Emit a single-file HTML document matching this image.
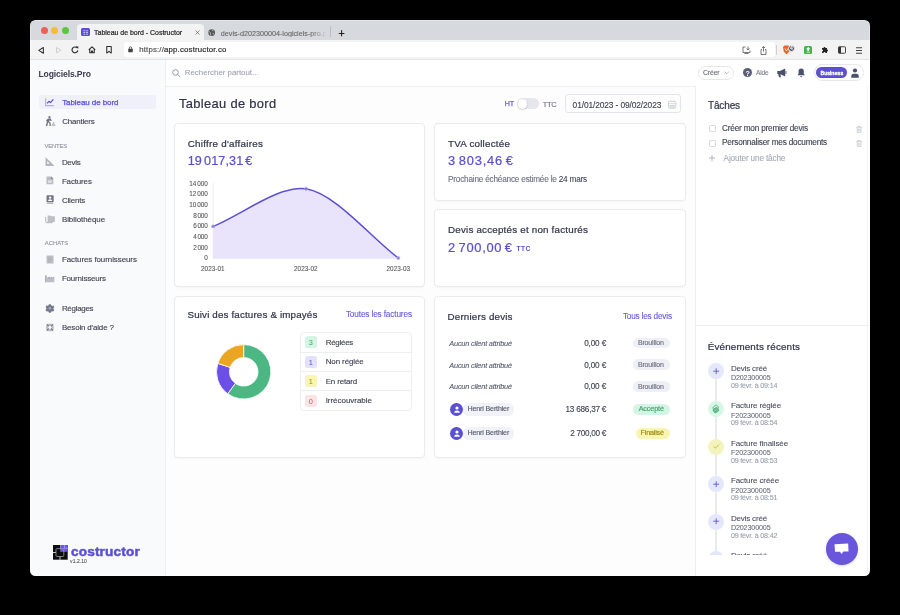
<!DOCTYPE html>
<html><head><meta charset="utf-8">
<style>
*{box-sizing:border-box;margin:0;padding:0}
html,body{width:900px;height:615px;overflow:hidden;background:#000}
body{font-family:"Liberation Sans",sans-serif;position:relative}
#win{will-change:transform;position:absolute;left:0;top:0;width:900px;height:615px;clip-path:inset(20px 30px 39px 30px round 5.5px);background:#fff}
.a{position:absolute}
.t{position:absolute;white-space:nowrap}
.card{position:absolute;background:#fff;border:1px solid #ebebee;border-radius:4px;box-shadow:0 1px 2px rgba(0,0,0,.035)}
svg{overflow:visible}
</style></head><body>
<div id="win">
<div class="a" style="left:30px;top:20px;width:841px;height:19.5px;background:#d6d9dd;"></div>
<div class="a" style="left:77px;top:23.5px;width:127px;height:16.5px;background:#f3f3f4;border-radius:4px 4px 0 0"></div>
<div class="a" style="left:30px;top:39.5px;width:841px;height:19.5px;background:#f3f3f3;"></div>
<div class="a" style="left:123.5px;top:42px;width:651px;height:14.5px;background:#ffffff;border-radius:3px"></div>
<div class="a" style="left:30px;top:59px;width:841px;height:1px;background:#e3e3e3;"></div>
<div class="a" style="left:40.5px;top:26.5px;width:7px;height:7px;background:#ee5f58;border-radius:50%"></div>
<div class="a" style="left:51.1px;top:26.5px;width:7px;height:7px;background:#f5bd2f;border-radius:50%"></div>
<div class="a" style="left:61.8px;top:26.5px;width:7px;height:7px;background:#5fc53f;border-radius:50%"></div>
<div class="a" style="left:81.2px;top:27.8px;width:8.6px;height:8.6px;background:#5b4fd1;border-radius:1.5px"></div>
<svg class="a" style="left:82.8px;top:29.6px" width="5.4" height="5" viewBox="0 0 11 10"><path d="M1 1.5h3.5M1 5h3.5M1 8.5h3.5M6.5 1.5h3.5M6.5 5h3.5M6.5 8.5h3.5" stroke="#fff" stroke-width="1.4"/></svg>
<div class="t" style="left:94.10px;top:29.47px;font-size:7px;line-height:7px;color:#2a2a2a;-webkit-text-stroke:0.22px #2a2a2a;letter-spacing:-0.027px">Tableau de bord - Costructor</div>
<svg class="a" style="left:195px;top:30.2px" width="5" height="5" viewBox="0 0 10 10"><path d="M1 1l8 8M9 1l-8 8" stroke="#555" stroke-width="1.3"/></svg>
<svg class="a" style="left:208.2px;top:28.6px" width="7.4" height="7.4" viewBox="0 0 16 16"><circle cx="8" cy="8" r="7.2" fill="#555"/><path d="M2.5 5.5c2 .5 3 2 2.5 3.5s1 2.5 1 5M9 1.2c-.5 1.8 1 2.8 3 2.5M10 9.5c1.5-.5 3 .5 3 2.5" stroke="#d6d9dd" stroke-width="1.5" fill="none"/></svg>
<div class="t" style="left:220.80px;top:29.51px;font-size:7.2px;line-height:7.2px;color:#666;-webkit-text-stroke:0.1px #666;width:106px;overflow:hidden;-webkit-mask-image:linear-gradient(90deg,#000 85%,transparent 100%)">devis-d202300004-logiciels-pro.pdf</div>
<div class="a" style="left:330px;top:26px;width:0.8px;height:11px;background:#b9bcc1;"></div>
<div class="t" style="left:338.60px;top:28.31px;font-size:10.5px;line-height:10.5px;color:#222;-webkit-text-stroke:0.4px #222">+</div>
<div class="a" style="left:30px;top:60px;width:135px;height:516px;background:#f9fafb;"></div>
<div class="a" style="left:165px;top:60px;width:1px;height:516px;background:#eceef1;"></div>
<div class="a" style="left:166px;top:60px;width:529px;height:516px;background:#fdfdfe;"></div>
<div class="a" style="left:166px;top:60px;width:705px;height:25.5px;background:#ffffff;"></div>
<div class="a" style="left:166px;top:85.5px;width:705px;height:1px;background:#eef0f3;"></div>
<div class="a" style="left:694.5px;top:86px;width:1px;height:490px;background:#eceef1;"></div>
<div class="a" style="left:695.5px;top:86px;width:175.5px;height:490px;background:#ffffff;"></div>
<div class="card" style="left:174px;top:122.5px;width:250.5px;height:164.5px"></div>
<div class="card" style="left:434px;top:122.5px;width:251.5px;height:78.5px"></div>
<div class="card" style="left:434px;top:209px;width:251.5px;height:78px"></div>
<div class="card" style="left:174px;top:295.5px;width:250.5px;height:162px"></div>
<div class="card" style="left:434px;top:295.5px;width:251.5px;height:162px"></div>
<svg class="a" style="left:38.4px;top:46.8px" width="6" height="6.8" viewBox="0 0 11 13"><path d="M10 1L1.2 6.5 10 12z" fill="none" stroke="#2e2e2e" stroke-width="2" stroke-linejoin="round"/></svg>
<svg class="a" style="left:55.6px;top:47px" width="5.4" height="6.4" viewBox="0 0 11 13"><path d="M1 1l8.8 5.5L1 12z" fill="none" stroke="#c4c4c4" stroke-width="1.6" stroke-linejoin="round"/></svg>
<svg class="a" style="left:71.2px;top:46.4px" width="8" height="7.6" viewBox="0 0 16 15"><path d="M13.6 8.5A5.8 5.8 0 1 1 11.8 3.4" fill="none" stroke="#2e2e2e" stroke-width="2.3"/><path d="M9.5 0.5l5.3 0.3-0.4 5.3z" fill="#2e2e2e"/></svg>
<svg class="a" style="left:88.4px;top:46.4px" width="8" height="7.6" viewBox="0 0 16 15"><path d="M1.5 7.5L8 1.5l6.5 6M3.5 6v7.5h3.5v-3.5h2v3.5h3.5V6" fill="none" stroke="#2e2e2e" stroke-width="2.2" stroke-linejoin="round"/></svg>
<svg class="a" style="left:106.3px;top:46px" width="6" height="7.6" viewBox="0 0 12 15"><path d="M1.5 1h9v13L6 10.5 1.5 14z" fill="none" stroke="#2e2e2e" stroke-width="2.1" stroke-linejoin="round"/></svg>
<svg class="a" style="left:128px;top:46px" width="5" height="6.5" viewBox="0 0 10 13"><path d="M2.5 6V4a2.5 2.5 0 0 1 5 0v2" fill="none" stroke="#444" stroke-width="1.6"/><rect x="0.5" y="5.5" width="9" height="7" rx="1.2" fill="#444"/></svg>
<div class="t" style="left:139.20px;top:46.30px;font-size:7.8px;line-height:7.8px;color:#262626;-webkit-text-stroke:0.18px #262626;letter-spacing:0.184px"><span style="color:#6f6f6f">https://</span>app.costructor.co</div>
<svg class="a" style="left:741.5px;top:46px" width="9" height="8" viewBox="0 0 18 16"><path d="M7 2H2v11h14V9" fill="none" stroke="#555" stroke-width="1.6"/><path d="M12 1v7M9 5l3 3 3-3" fill="none" stroke="#555" stroke-width="1.6"/><path d="M5 15h8" stroke="#555" stroke-width="1.6"/></svg>
<svg class="a" style="left:759.5px;top:45.5px" width="7" height="9" viewBox="0 0 14 18"><path d="M4 7H2v10h10V7h-2M7 1v10M4 4l3-3 3 3" fill="none" stroke="#555" stroke-width="1.6"/></svg>
<div class="a" style="left:775.8px;top:45px;width:0.8px;height:10px;background:#cfcfcf;"></div>
<svg class="a" style="left:782px;top:45px" width="9" height="10" viewBox="0 0 18 20"><path d="M2 4l3-3h8l3 3-1.5 9L9 19l-5.5-6z" fill="#f0632b"/><path d="M6 7l3 5 3-5" stroke="#fff" stroke-width="1.6" fill="none"/></svg>
<div class="a" style="left:787.8px;top:44.6px;width:7px;height:7px;background:#535766;border-radius:50%;border:0.8px solid #f3f3f3"></div>
<div class="t" style="left:789.90px;top:46.37px;font-size:5px;line-height:5px;color:#fff;font-weight:700">4</div>
<div class="a" style="left:803.6px;top:45.8px;width:8.4px;height:8.4px;background:#3fb54a;border-radius:1.5px"></div>
<svg class="a" style="left:805.6px;top:47.2px" width="4.4" height="5.6" viewBox="0 0 8 10"><path d="M4 0L0 4h2.5v3h3V4H8zM1 8.5h6V10H1z" fill="#fff"/></svg>
<svg class="a" style="left:821px;top:46px" width="8" height="8" viewBox="0 0 16 16"><path d="M2 4h3a2 2 0 1 1 4 0h3v3a2 2 0 1 1 0 4v3H9a2 2 0 1 0-4 0H2v-3a2 2 0 1 0 0-4z" fill="#222"/></svg>
<svg class="a" style="left:838px;top:46px" width="8" height="8" viewBox="0 0 16 16"><rect x="1" y="1.5" width="14" height="13" rx="2" fill="none" stroke="#333" stroke-width="1.8"/><rect x="1" y="1.5" width="5" height="13" fill="#333"/></svg>
<svg class="a" style="left:856px;top:46.5px" width="6" height="7" viewBox="0 0 12 14"><path d="M0 1.5h12M0 7h12M0 12.5h12" stroke="#444" stroke-width="2"/></svg>
<div class="t" style="left:38.50px;top:70.42px;font-size:8.6px;line-height:8.6px;color:#3b3d4f;font-weight:700;letter-spacing:-0.131px">Logiciels.Pro</div>
<div class="a" style="left:39.3px;top:95px;width:117px;height:14px;background:#f0f0fb;border-radius:3px"></div>
<div class="t" style="left:62.20px;top:99.03px;font-size:8.0px;line-height:8.0px;color:#5b4fd1;-webkit-text-stroke:0.25px #5b4fd1;letter-spacing:-0.078px">Tableau de bord</div>
<div class="t" style="left:62.20px;top:117.77px;font-size:7.95px;line-height:7.95px;color:#3f4152;-webkit-text-stroke:0.12px #3f4152;letter-spacing:-0.173px">Chantiers</div>
<div class="t" style="left:44.60px;top:143.91px;font-size:5.9px;line-height:5.9px;color:#8e91a3;-webkit-text-stroke:0.1px #8e91a3;letter-spacing:-0.196px">VENTES</div>
<div class="t" style="left:61.90px;top:158.97px;font-size:7.95px;line-height:7.95px;color:#3f4152;-webkit-text-stroke:0.12px #3f4152;letter-spacing:-0.265px">Devis</div>
<div class="t" style="left:61.90px;top:177.97px;font-size:7.95px;line-height:7.95px;color:#3f4152;-webkit-text-stroke:0.12px #3f4152;letter-spacing:-0.127px">Factures</div>
<div class="t" style="left:61.90px;top:197.17px;font-size:7.95px;line-height:7.95px;color:#3f4152;-webkit-text-stroke:0.12px #3f4152;letter-spacing:-0.161px">Clients</div>
<div class="t" style="left:61.90px;top:216.07px;font-size:7.95px;line-height:7.95px;color:#3f4152;-webkit-text-stroke:0.12px #3f4152;letter-spacing:-0.046px">Biblioth&egrave;que</div>
<div class="t" style="left:44.80px;top:241.11px;font-size:5.9px;line-height:5.9px;color:#8e91a3;-webkit-text-stroke:0.1px #8e91a3;letter-spacing:-0.034px">ACHATS</div>
<div class="t" style="left:61.90px;top:256.27px;font-size:7.95px;line-height:7.95px;color:#3f4152;-webkit-text-stroke:0.12px #3f4152;letter-spacing:-0.066px">Factures fournisseurs</div>
<div class="t" style="left:61.90px;top:275.47px;font-size:7.95px;line-height:7.95px;color:#3f4152;-webkit-text-stroke:0.12px #3f4152;letter-spacing:-0.163px">Fournisseurs</div>
<div class="t" style="left:61.90px;top:305.07px;font-size:7.95px;line-height:7.95px;color:#3f4152;-webkit-text-stroke:0.12px #3f4152;letter-spacing:-0.264px">R&eacute;glages</div>
<div class="t" style="left:61.90px;top:324.27px;font-size:7.95px;line-height:7.95px;color:#3f4152;-webkit-text-stroke:0.12px #3f4152;letter-spacing:-0.146px">Besoin d'aide ?</div>
<div class="t" style="left:71.00px;top:545.29px;font-size:13.6px;line-height:13.6px;color:#5b4fd1;font-weight:700;-webkit-text-stroke:0.5px #5b4fd1;letter-spacing:0.163px">costructor</div>
<div class="t" style="left:70.10px;top:559.07px;font-size:5px;line-height:5px;color:#555;-webkit-text-stroke:0.1px #555;letter-spacing:0.066px">v1.2.10</div>
<svg class="a" style="left:171.5px;top:68.5px" width="9" height="8.5" viewBox="0 0 18 17"><circle cx="7" cy="7" r="5.6" fill="none" stroke="#8a8f9d" stroke-width="1.8"/><path d="M11 11l5.5 5" stroke="#8a8f9d" stroke-width="1.9"/></svg>
<div class="t" style="left:184.80px;top:68.91px;font-size:7.9px;line-height:7.9px;color:#9ea1b0;-webkit-text-stroke:0.1px #9ea1b0;letter-spacing:-0.021px">Rechercher partout...</div>
<div class="a" style="left:698.4px;top:65.6px;width:36px;height:14px;background:#fff;border:1px solid #e5e7eb;border-radius:7px"></div>
<div class="t" style="left:703.00px;top:69.86px;font-size:6.9px;line-height:6.9px;color:#6b6e7d;-webkit-text-stroke:0.12px #6b6e7d;letter-spacing:-0.159px">Cr&eacute;er</div>
<svg class="a" style="left:724px;top:71.2px" width="5.5" height="3.5" viewBox="0 0 11 7"><path d="M1 1l4.5 4.5L10 1" fill="none" stroke="#9a9cab" stroke-width="1.4"/></svg>
<div class="a" style="left:743px;top:68px;width:9.4px;height:9.4px;background:#5a5e78;border-radius:50%"></div>
<div class="t" style="left:745.50px;top:69.97px;font-size:7px;line-height:7px;color:#fff;font-weight:700">?</div>
<div class="t" style="left:756.00px;top:70.21px;font-size:6.6px;line-height:6.6px;color:#7a7d8c;-webkit-text-stroke:0.1px #7a7d8c;letter-spacing:-0.201px">Aide</div>
<svg class="a" style="left:777px;top:68.3px" width="9.4" height="9.6" viewBox="0 0 16 16"><path d="M0.5 5h4.5l9-4.5v14L5 10H0.5z" fill="#4b4f6e"/><path d="M2 10h3.8l1 5.5H3.5z" fill="#4b4f6e"/><rect x="14.6" y="5" width="1.4" height="5" fill="#4b4f6e"/></svg>
<svg class="a" style="left:796.6px;top:68px" width="8.4" height="9.5" viewBox="0 0 16 18"><path d="M8 1a5 5 0 0 0-5 5v5l-2 3h14l-2-3V6a5 5 0 0 0-5-5z" fill="#4b4f6e"/><path d="M6 15.5a2 2 0 0 0 4 0z" fill="#4b4f6e"/></svg>
<div class="a" style="left:814px;top:64.4px;width:49.6px;height:16.6px;background:#fff;border:1px solid #e6e7ec;border-radius:8.3px"></div>
<div class="a" style="left:816px;top:67px;width:31.4px;height:11.4px;background:#5b4fd1;border-radius:5.7px"></div>
<div class="t" style="left:820.40px;top:70.54px;font-size:5.5px;line-height:5.5px;color:#fff;-webkit-text-stroke:0.35px #fff;letter-spacing:0.067px">Business</div>
<svg class="a" style="left:851px;top:67.5px" width="8" height="10" viewBox="0 0 16 20"><circle cx="8" cy="5" r="4.2" fill="#4b4f6e"/><path d="M0.5 19.5v-3a5 5 0 0 1 5-5h5a5 5 0 0 1 5 5v3z" fill="#4b4f6e"/></svg>
<div class="t" style="left:179.10px;top:97.78px;font-size:12.9px;line-height:12.9px;color:#2f3146;-webkit-text-stroke:0.2px #2f3146;letter-spacing:0.324px">Tableau de bord</div>
<div class="t" style="left:504.80px;top:101.19px;font-size:7.1px;line-height:7.1px;color:#6a5ed6;-webkit-text-stroke:0.25px #6a5ed6;letter-spacing:-0.169px">HT</div>
<div class="a" style="left:516.7px;top:98.3px;width:22.7px;height:11.2px;background:#e6e7ec;border-radius:5.6px"></div>
<div class="a" style="left:517.5px;top:99.1px;width:9.6px;height:9.6px;background:#fff;border-radius:50%;box-shadow:0 0.5px 1.5px rgba(0,0,0,.25)"></div>
<div class="t" style="left:542.70px;top:100.90px;font-size:7.56px;line-height:7.56px;color:#6b6e7d;-webkit-text-stroke:0.12px #6b6e7d;letter-spacing:-0.286px">TTC</div>
<div class="a" style="left:565px;top:93.9px;width:116.4px;height:19.5px;background:#fff;border:1px solid #e3e5ea;border-radius:3px"></div>
<div class="t" style="left:572.60px;top:100.57px;font-size:8.42px;line-height:8.42px;color:#3f4152;-webkit-text-stroke:0.12px #3f4152;letter-spacing:-0.128px">01/01/2023 - 09/02/2023</div>
<svg class="a" style="left:668.3px;top:99.5px" width="8.3" height="9" viewBox="0 0 16 17"><rect x="1" y="2.5" width="14" height="13.5" rx="2" fill="none" stroke="#c2c5cf" stroke-width="1.4"/><path d="M1 6.5h14M4.5 0.5v3M11.5 0.5v3M5 9.5v5M8 9.5v5M11 9.5v5M2 10h12M2 13h12" stroke="#c2c5cf" stroke-width="1.1"/></svg>
<div class="t" style="left:187.70px;top:138.50px;font-size:9.8px;line-height:9.8px;color:#33354a;-webkit-text-stroke:0.22px #33354a;letter-spacing:0.266px">Chiffre d'affaires</div>
<div class="t" style="left:187.70px;top:155.23px;font-size:12.6px;line-height:12.6px;color:#5b4fd1;-webkit-text-stroke:0.22px #5b4fd1;word-spacing:-1.6px;letter-spacing:0.136px">19 017,31 &euro;</div>
<div class="t" style="right:692.30px;top:180.78px;font-size:6.4px;line-height:6.4px;color:#555;-webkit-text-stroke:0.08px #555;word-spacing:-1px;letter-spacing:-0.029px">14 000</div>
<div class="t" style="right:692.30px;top:191.44px;font-size:6.4px;line-height:6.4px;color:#555;-webkit-text-stroke:0.08px #555;word-spacing:-1px;letter-spacing:-0.029px">12 000</div>
<div class="t" style="right:692.30px;top:202.10px;font-size:6.4px;line-height:6.4px;color:#555;-webkit-text-stroke:0.08px #555;word-spacing:-1px;letter-spacing:-0.029px">10 000</div>
<div class="t" style="right:692.30px;top:212.75px;font-size:6.4px;line-height:6.4px;color:#555;-webkit-text-stroke:0.08px #555;word-spacing:-1px;letter-spacing:-0.125px">8 000</div>
<div class="t" style="right:692.30px;top:223.41px;font-size:6.4px;line-height:6.4px;color:#555;-webkit-text-stroke:0.08px #555;word-spacing:-1px;letter-spacing:-0.125px">6 000</div>
<div class="t" style="right:692.30px;top:234.07px;font-size:6.4px;line-height:6.4px;color:#555;-webkit-text-stroke:0.08px #555;word-spacing:-1px;letter-spacing:-0.125px">4 000</div>
<div class="t" style="right:692.30px;top:244.73px;font-size:6.4px;line-height:6.4px;color:#555;-webkit-text-stroke:0.08px #555;word-spacing:-1px;letter-spacing:-0.125px">2 000</div>
<div class="t" style="right:692.30px;top:255.38px;font-size:6.4px;line-height:6.4px;color:#555;-webkit-text-stroke:0.08px #555;word-spacing:-1px;letter-spacing:-0.163px">0</div>
<div class="t" style="left:192.8px;width:40px;text-align:center;top:265.98px;font-size:6.4px;line-height:6.4px;color:#555;-webkit-text-stroke:0.08px #555">2023-01</div>
<div class="t" style="left:285.8px;width:40px;text-align:center;top:265.98px;font-size:6.4px;line-height:6.4px;color:#555;-webkit-text-stroke:0.08px #555">2023-02</div>
<div class="t" style="left:378.3px;width:40px;text-align:center;top:265.98px;font-size:6.4px;line-height:6.4px;color:#555;-webkit-text-stroke:0.08px #555">2023-03</div>
<svg class="a" style="left:0;top:0" width="900" height="615"><line x1="213.3" y1="183" x2="213.3" y2="258.5" stroke="#e8e8ec" stroke-width="0.7"/><line x1="213" y1="258.5" x2="399" y2="258.5" stroke="#ececf0" stroke-width="0.6"/><path d="M213.1,226.4 C241.0,215.12 280.25,184.39 306.1,188.8 C335.81,193.87 370.64,237.24 398.3,258 L398.3,258.5 L213.1,258.5Z" fill="#e9e4fc"/><path d="M213.1,226.4 C241.0,215.12 280.25,184.39 306.1,188.8 C335.81,193.87 370.64,237.24 398.3,258" fill="none" stroke="#5b4fd1" stroke-width="1.5"/><circle cx="213.1" cy="226.4" r="1.6" fill="#8a7fe3" stroke="#b5adf0" stroke-width="0.6"/><circle cx="306.1" cy="188.8" r="1.6" fill="#7d70e0" stroke="#b5adf0" stroke-width="0.6"/><circle cx="398.3" cy="258" r="1.6" fill="#8a7fe3" stroke="#b5adf0" stroke-width="0.6"/></svg>
<div class="t" style="left:448.00px;top:138.90px;font-size:9.8px;line-height:9.8px;color:#33354a;-webkit-text-stroke:0.22px #33354a;letter-spacing:0.226px">TVA collect&eacute;e</div>
<div class="t" style="left:448.00px;top:154.88px;font-size:12.9px;line-height:12.9px;color:#5b4fd1;-webkit-text-stroke:0.22px #5b4fd1;word-spacing:-1.6px;letter-spacing:0.796px">3 803,46 &euro;</div>
<div class="t" style="left:448.00px;top:175.55px;font-size:8.21px;line-height:8.21px;color:#6b6e80;-webkit-text-stroke:0.1px #6b6e80;letter-spacing:-0.200px">Prochaine &eacute;ch&eacute;ance estim&eacute;e le <span style="color:#33354a">24 mars</span></div>
<div class="t" style="left:448.00px;top:224.90px;font-size:9.8px;line-height:9.8px;color:#33354a;-webkit-text-stroke:0.22px #33354a;letter-spacing:0.205px">Devis accept&eacute;s et non factur&eacute;s</div>
<div class="t" style="left:448.00px;top:241.98px;font-size:12.9px;line-height:12.9px;color:#5b4fd1;-webkit-text-stroke:0.22px #5b4fd1;word-spacing:-1.6px;letter-spacing:0.696px">2 700,00 &euro;</div>
<div class="t" style="left:516.40px;top:246.41px;font-size:6.6px;line-height:6.6px;color:#5b4fd1;font-weight:700;letter-spacing:0.536px">TTC</div>
<div class="t" style="left:187.50px;top:309.70px;font-size:9.8px;line-height:9.8px;color:#33354a;-webkit-text-stroke:0.22px #33354a;letter-spacing:0.149px">Suivi des factures &amp; impay&eacute;s</div>
<div class="t" style="left:345.90px;top:310.85px;font-size:8.21px;line-height:8.21px;color:#6a5ed6;-webkit-text-stroke:0.12px #6a5ed6;letter-spacing:-0.128px">Toutes les factures</div>
<svg class="a" style="left:0;top:0" width="900" height="615"><path d="M243.70,344.60 A27.2,27.2 0 1 1 227.71,393.81 L235.29,383.37 A14.3,14.3 0 1 0 243.70,357.50Z" fill="#4cb782" stroke="#fff" stroke-width="0.8"/><path d="M227.71,393.81 A27.2,27.2 0 0 1 217.83,363.39 L230.10,367.38 A14.3,14.3 0 0 0 235.29,383.37Z" fill="#6c4fe6" stroke="#fff" stroke-width="0.8"/><path d="M217.83,363.39 A27.2,27.2 0 0 1 243.70,344.60 L243.70,357.50 A14.3,14.3 0 0 0 230.10,367.38Z" fill="#eaa523" stroke="#fff" stroke-width="0.8"/></svg>
<div class="a" style="left:300.1px;top:332.3px;width:112px;height:78.4px;background:#fff;border:1px solid #eceef2;border-radius:4px"></div>
<div class="a" style="left:301px;top:351.7px;width:110.2px;height:0.8px;background:#eceef2;"></div>
<div class="a" style="left:301px;top:370.9px;width:110.2px;height:0.8px;background:#eceef2;"></div>
<div class="a" style="left:301px;top:390.2px;width:110.2px;height:0.8px;background:#eceef2;"></div>
<div class="a" style="left:304.5px;top:336.1px;width:12.5px;height:12px;background:#d3f5e3;border-radius:2.5px"></div>
<div class="t" style="left:304.5px;width:12.5px;text-align:center;top:339.24px;font-size:7.4px;line-height:7.4px;color:#45a36f">3</div>
<div class="t" style="left:325.70px;top:338.64px;font-size:7.99px;line-height:7.99px;color:#3f4152;-webkit-text-stroke:0.12px #3f4152;letter-spacing:-0.283px">R&eacute;gl&eacute;es</div>
<div class="a" style="left:304.5px;top:355.65000000000003px;width:12.5px;height:12px;background:#e3e1fb;border-radius:2.5px"></div>
<div class="t" style="left:304.5px;width:12.5px;text-align:center;top:358.79px;font-size:7.4px;line-height:7.4px;color:#5b4fd1">1</div>
<div class="t" style="left:325.70px;top:358.19px;font-size:7.99px;line-height:7.99px;color:#3f4152;-webkit-text-stroke:0.12px #3f4152;letter-spacing:-0.107px">Non r&eacute;gl&eacute;e</div>
<div class="a" style="left:304.5px;top:375.20000000000005px;width:12.5px;height:12px;background:#f8f5b8;border-radius:2.5px"></div>
<div class="t" style="left:304.5px;width:12.5px;text-align:center;top:378.34px;font-size:7.4px;line-height:7.4px;color:#a78a13">1</div>
<div class="t" style="left:325.70px;top:377.74px;font-size:7.99px;line-height:7.99px;color:#3f4152;-webkit-text-stroke:0.12px #3f4152;letter-spacing:-0.168px">En retard</div>
<div class="a" style="left:304.5px;top:394.75px;width:12.5px;height:12px;background:#fde3e6;border-radius:2.5px"></div>
<div class="t" style="left:304.5px;width:12.5px;text-align:center;top:397.89px;font-size:7.4px;line-height:7.4px;color:#d4505e">0</div>
<div class="t" style="left:325.70px;top:397.29px;font-size:7.99px;line-height:7.99px;color:#3f4152;-webkit-text-stroke:0.12px #3f4152;letter-spacing:-0.034px">Irr&eacute;couvrable</div>
<div class="t" style="left:447.50px;top:311.90px;font-size:9.8px;line-height:9.8px;color:#33354a;-webkit-text-stroke:0.22px #33354a;letter-spacing:0.183px">Derniers devis</div>
<div class="t" style="left:622.90px;top:313.35px;font-size:8.21px;line-height:8.21px;color:#6a5ed6;-webkit-text-stroke:0.12px #6a5ed6;letter-spacing:-0.187px">Tous les devis</div>
<div class="t" style="left:449.30px;top:339.69px;font-size:7.34px;line-height:7.34px;color:#55586b;font-style:italic;-webkit-text-stroke:0.1px #55586b;letter-spacing:-0.185px">Aucun client attribu&eacute;</div>
<div class="t" style="right:293.90px;top:339.65px;font-size:8.21px;line-height:8.21px;color:#3f4152;-webkit-text-stroke:0.12px #3f4152;letter-spacing:-0.142px">0,00 &euro;</div>
<div class="a" style="left:632.5px;top:337.5px;width:37.4px;height:10.7px;background:#eff0f5;border-radius:5.3px"></div>
<div class="t" style="left:637.90px;top:339.36px;font-size:7.02px;line-height:7.02px;color:#6b6e80;-webkit-text-stroke:0.12px #6b6e80;letter-spacing:-0.152px">Brouillon</div>
<div class="t" style="left:449.30px;top:361.59px;font-size:7.34px;line-height:7.34px;color:#55586b;font-style:italic;-webkit-text-stroke:0.1px #55586b;letter-spacing:-0.185px">Aucun client attribu&eacute;</div>
<div class="t" style="right:293.90px;top:361.55px;font-size:8.21px;line-height:8.21px;color:#3f4152;-webkit-text-stroke:0.12px #3f4152;letter-spacing:-0.142px">0,00 &euro;</div>
<div class="a" style="left:632.5px;top:359.4px;width:37.4px;height:10.7px;background:#eff0f5;border-radius:5.3px"></div>
<div class="t" style="left:637.90px;top:361.26px;font-size:7.02px;line-height:7.02px;color:#6b6e80;-webkit-text-stroke:0.12px #6b6e80;letter-spacing:-0.152px">Brouillon</div>
<div class="t" style="left:449.30px;top:383.39px;font-size:7.34px;line-height:7.34px;color:#55586b;font-style:italic;-webkit-text-stroke:0.1px #55586b;letter-spacing:-0.185px">Aucun client attribu&eacute;</div>
<div class="t" style="right:293.90px;top:383.35px;font-size:8.21px;line-height:8.21px;color:#3f4152;-webkit-text-stroke:0.12px #3f4152;letter-spacing:-0.142px">0,00 &euro;</div>
<div class="a" style="left:632.5px;top:381.2px;width:37.4px;height:10.7px;background:#eff0f5;border-radius:5.3px"></div>
<div class="t" style="left:637.90px;top:383.06px;font-size:7.02px;line-height:7.02px;color:#6b6e80;-webkit-text-stroke:0.12px #6b6e80;letter-spacing:-0.152px">Brouillon</div>
<div class="a" style="left:463.2px;top:402.90000000000003px;width:51px;height:12.8px;background:#f1f2f7;border-radius:6.4px"></div>
<div class="a" style="left:450.1px;top:402.8px;width:13px;height:13px;background:#5b4fd1;border-radius:50%"></div>
<svg class="a" style="left:453.6px;top:405.70px" width="6" height="7" viewBox="0 0 12 14"><circle cx="6" cy="4" r="3.2" fill="#fff"/><path d="M0.5 13.5a5.5 4.5 0 0 1 11 0z" fill="#fff"/></svg>
<div class="t" style="left:467.50px;top:406.26px;font-size:7.13px;line-height:7.13px;color:#55586b;-webkit-text-stroke:0.12px #55586b;letter-spacing:-0.167px">Henri Berthier</div>
<div class="t" style="right:293.90px;top:406.05px;font-size:8.21px;line-height:8.21px;color:#3f4152;-webkit-text-stroke:0.12px #3f4152;letter-spacing:-0.254px">13 686,37 &euro;</div>
<div class="a" style="left:633.3px;top:403.90000000000003px;width:36.60000000000002px;height:10.8px;background:#d5f5e4;border-radius:5.4px"></div>
<div class="t" style="left:638.70px;top:406.26px;font-size:7.13px;line-height:7.13px;color:#3f9e6a;-webkit-text-stroke:0.15px #3f9e6a;letter-spacing:-0.075px">Accept&eacute;</div>
<div class="a" style="left:463.2px;top:426.90000000000003px;width:51px;height:12.8px;background:#f1f2f7;border-radius:6.4px"></div>
<div class="a" style="left:450.1px;top:426.8px;width:13px;height:13px;background:#5b4fd1;border-radius:50%"></div>
<svg class="a" style="left:453.6px;top:429.70px" width="6" height="7" viewBox="0 0 12 14"><circle cx="6" cy="4" r="3.2" fill="#fff"/><path d="M0.5 13.5a5.5 4.5 0 0 1 11 0z" fill="#fff"/></svg>
<div class="t" style="left:467.50px;top:430.26px;font-size:7.13px;line-height:7.13px;color:#55586b;-webkit-text-stroke:0.12px #55586b;letter-spacing:-0.167px">Henri Berthier</div>
<div class="t" style="right:293.90px;top:430.05px;font-size:8.21px;line-height:8.21px;color:#3f4152;-webkit-text-stroke:0.12px #3f4152;letter-spacing:-0.287px">2 700,00 &euro;</div>
<div class="a" style="left:635.5px;top:427.90000000000003px;width:34.39999999999998px;height:10.8px;background:#f8f4b5;border-radius:5.4px"></div>
<div class="t" style="left:640.50px;top:430.26px;font-size:7.13px;line-height:7.13px;color:#9b8514;-webkit-text-stroke:0.15px #9b8514;letter-spacing:-0.152px">Finalis&eacute;</div>
<div class="t" style="left:707.90px;top:100.53px;font-size:10px;line-height:10px;color:#33354a;-webkit-text-stroke:0.22px #33354a;letter-spacing:-0.119px">T&acirc;ches</div>
<div class="a" style="left:709.4px;top:125.4px;width:7px;height:7px;background:#fff;border:0.8px solid #d5d7de;border-radius:1.5px"></div>
<div class="t" style="left:722.10px;top:124.75px;font-size:8.21px;line-height:8.21px;color:#3f4152;-webkit-text-stroke:0.12px #3f4152;letter-spacing:-0.194px">Cr&eacute;er mon premier devis</div>
<svg class="a" style="left:855.5px;top:125.50px" width="6.2" height="7" viewBox="0 0 12 14"><path d="M0.5 2.5h11M4 2.5V1h4v1.5M1.8 2.5l.8 10.5h6.8l.8-10.5M4.6 5v6M7.4 5v6" fill="none" stroke="#b0b3c0" stroke-width="1.1"/></svg>
<div class="a" style="left:709.4px;top:140.0px;width:7px;height:7px;background:#fff;border:0.8px solid #d5d7de;border-radius:1.5px"></div>
<div class="t" style="left:722.10px;top:139.35px;font-size:8.21px;line-height:8.21px;color:#3f4152;-webkit-text-stroke:0.12px #3f4152;letter-spacing:-0.202px">Personnaliser mes documents</div>
<svg class="a" style="left:855.5px;top:140.10px" width="6.2" height="7" viewBox="0 0 12 14"><path d="M0.5 2.5h11M4 2.5V1h4v1.5M1.8 2.5l.8 10.5h6.8l.8-10.5M4.6 5v6M7.4 5v6" fill="none" stroke="#b0b3c0" stroke-width="1.1"/></svg>
<svg class="a" style="left:709px;top:155.3px" width="6" height="6" viewBox="0 0 12 12"><path d="M6 0v12M0 6h12" stroke="#6f7282" stroke-width="1"/></svg>
<div class="t" style="left:723.60px;top:154.75px;font-size:8.21px;line-height:8.21px;color:#a6a9b8;-webkit-text-stroke:0.1px #a6a9b8;letter-spacing:-0.157px">Ajouter une t&acirc;che</div>
<div class="a" style="left:695.5px;top:325.2px;width:174.5px;height:0.8px;background:#eceef1;"></div>
<div class="a" style="left:867.3px;top:86px;width:0.8px;height:490px;background:#f1f2f4;"></div>
<div class="t" style="left:707.80px;top:342.00px;font-size:9.8px;line-height:9.8px;color:#33354a;-webkit-text-stroke:0.22px #33354a;letter-spacing:0.170px">&Eacute;v&eacute;nements r&eacute;cents</div>
<div class="a" style="left:695.5px;top:355px;width:174.5px;height:200px;overflow:hidden">
<div class="a" style="left:19.600000000000023px;top:16.399999999999977px;width:1.5px;height:200px;background:#e9eaee;"></div>
<div class="a" style="left:12.299999999999955px;top:8.399999999999977px;width:16px;height:16px;background:#e5e7fc;border-radius:50%"></div>
<svg class="a" style="left:17.10px;top:13.20px" width="6.4" height="6.4" viewBox="0 0 12 12"><path d="M6 0.5v11M0.5 6h11" stroke="#5b4fd1" stroke-width="1.6"/></svg>
<div class="t" style="left:35.40px;top:9.73px;font-size:8.0px;line-height:8.0px;color:#45475a;-webkit-text-stroke:0.06px #45475a;letter-spacing:-0.166px">Devis cr&eacute;&eacute;</div>
<div class="t" style="left:35.40px;top:19.07px;font-size:7.24px;line-height:7.24px;color:#646778;-webkit-text-stroke:0.05px #646778;letter-spacing:-0.182px">D202300005</div>
<div class="t" style="left:35.40px;top:27.66px;font-size:7.13px;line-height:7.13px;color:#9a9dac;-webkit-text-stroke:0.1px #9a9dac;letter-spacing:-0.175px">09 f&eacute;vr. &agrave; 09:14</div>
<div class="a" style="left:12.299999999999955px;top:45.94999999999999px;width:16px;height:16px;background:#d8f7e7;border-radius:50%"></div>
<svg class="a" style="left:16.30px;top:49.95px" width="8" height="8" viewBox="0 0 16 16"><g transform="rotate(-35 8 8)"><rect x="4" y="1.5" width="10" height="8" rx="2.5" fill="none" stroke="#52ab7c" stroke-width="1.6"/><rect x="1.5" y="5.5" width="10" height="8.5" rx="2.5" fill="#6cc291" stroke="#52ab7c" stroke-width="1.6"/></g></svg>
<div class="t" style="left:35.40px;top:47.28px;font-size:8.0px;line-height:8.0px;color:#45475a;-webkit-text-stroke:0.06px #45475a;letter-spacing:-0.100px">Facture r&eacute;gl&eacute;e</div>
<div class="t" style="left:35.40px;top:56.62px;font-size:7.24px;line-height:7.24px;color:#646778;-webkit-text-stroke:0.05px #646778;letter-spacing:-0.093px">F202300005</div>
<div class="t" style="left:35.40px;top:65.21px;font-size:7.13px;line-height:7.13px;color:#9a9dac;-webkit-text-stroke:0.1px #9a9dac;letter-spacing:-0.175px">09 f&eacute;vr. &agrave; 08:54</div>
<div class="a" style="left:12.299999999999955px;top:83.5px;width:16px;height:16px;background:#f3f4bd;border-radius:50%"></div>
<svg class="a" style="left:17.00px;top:88.90px" width="6.6" height="5" viewBox="0 0 13 10"><path d="M1 5l3.5 3.5L12 1" fill="none" stroke="#c7b43a" stroke-width="1.8"/></svg>
<div class="t" style="left:35.40px;top:84.83px;font-size:8.0px;line-height:8.0px;color:#45475a;-webkit-text-stroke:0.06px #45475a;letter-spacing:-0.088px">Facture finalis&eacute;e</div>
<div class="t" style="left:35.40px;top:94.17px;font-size:7.24px;line-height:7.24px;color:#646778;-webkit-text-stroke:0.05px #646778;letter-spacing:-0.093px">F202300005</div>
<div class="t" style="left:35.40px;top:102.76px;font-size:7.13px;line-height:7.13px;color:#9a9dac;-webkit-text-stroke:0.1px #9a9dac;letter-spacing:-0.175px">09 f&eacute;vr. &agrave; 08:53</div>
<div class="a" style="left:12.299999999999955px;top:121.04999999999995px;width:16px;height:16px;background:#e5e7fc;border-radius:50%"></div>
<svg class="a" style="left:17.10px;top:125.85px" width="6.4" height="6.4" viewBox="0 0 12 12"><path d="M6 0.5v11M0.5 6h11" stroke="#5b4fd1" stroke-width="1.6"/></svg>
<div class="t" style="left:35.40px;top:122.38px;font-size:8.0px;line-height:8.0px;color:#45475a;-webkit-text-stroke:0.06px #45475a;letter-spacing:-0.097px">Facture cr&eacute;&eacute;e</div>
<div class="t" style="left:35.40px;top:131.72px;font-size:7.24px;line-height:7.24px;color:#646778;-webkit-text-stroke:0.05px #646778;letter-spacing:-0.093px">F202300005</div>
<div class="t" style="left:35.40px;top:140.31px;font-size:7.13px;line-height:7.13px;color:#9a9dac;-webkit-text-stroke:0.1px #9a9dac;letter-spacing:-0.175px">09 f&eacute;vr. &agrave; 08:51</div>
<div class="a" style="left:12.299999999999955px;top:158.5999999999999px;width:16px;height:16px;background:#e5e7fc;border-radius:50%"></div>
<svg class="a" style="left:17.10px;top:163.40px" width="6.4" height="6.4" viewBox="0 0 12 12"><path d="M6 0.5v11M0.5 6h11" stroke="#5b4fd1" stroke-width="1.6"/></svg>
<div class="t" style="left:35.40px;top:159.93px;font-size:8.0px;line-height:8.0px;color:#45475a;-webkit-text-stroke:0.06px #45475a;letter-spacing:-0.166px">Devis cr&eacute;&eacute;</div>
<div class="t" style="left:35.40px;top:169.27px;font-size:7.24px;line-height:7.24px;color:#646778;-webkit-text-stroke:0.05px #646778;letter-spacing:-0.182px">D202300005</div>
<div class="t" style="left:35.40px;top:177.86px;font-size:7.13px;line-height:7.13px;color:#9a9dac;-webkit-text-stroke:0.1px #9a9dac;letter-spacing:-0.175px">09 f&eacute;vr. &agrave; 08:42</div>
<div class="a" style="left:12.299999999999955px;top:196.14999999999998px;width:16px;height:16px;background:#e5e7fc;border-radius:50%"></div>
<svg class="a" style="left:17.10px;top:200.95px" width="6.4" height="6.4" viewBox="0 0 12 12"><path d="M6 0.5v11M0.5 6h11" stroke="#5b4fd1" stroke-width="1.6"/></svg>
<div class="t" style="left:35.40px;top:197.48px;font-size:8.0px;line-height:8.0px;color:#45475a;-webkit-text-stroke:0.06px #45475a;letter-spacing:-0.166px">Devis cr&eacute;&eacute;</div>
<div class="t" style="left:35.40px;top:206.82px;font-size:7.24px;line-height:7.24px;color:#646778;-webkit-text-stroke:0.05px #646778;letter-spacing:-0.182px">D202300005</div>
<div class="t" style="left:35.40px;top:215.41px;font-size:7.13px;line-height:7.13px;color:#9a9dac;-webkit-text-stroke:0.1px #9a9dac;letter-spacing:-0.175px">09 f&eacute;vr. &agrave; 08:40</div>
</div>
<div class="a" style="left:826px;top:533.3px;width:32px;height:32px;background:#6a55dd;border-radius:50%;box-shadow:0 1px 3px rgba(0,0,0,.15)"></div>
<svg class="a" style="left:833.8px;top:543.2px" width="15" height="12.2" viewBox="0 0 15 12"><path d="M0.5 1.2L14.2 0.3l0.3 8.2H9.3L7.6 11 6 8.7H1z" fill="#fff"/></svg>
<svg class="a" style="left:45.3px;top:97.8px" width="9.2" height="8.2" viewBox="0 0 18 16"><path d="M1.2 0.5V14.8h16.5" fill="none" stroke="#b3acec" stroke-width="2.2"/><path d="M4 10.5l3.8-4 3 2.5 5.5-6.2" fill="none" stroke="#5b4fd1" stroke-width="2.4" stroke-linejoin="round"/></svg>
<svg class="a" style="left:44.5px;top:116px" width="11" height="10" viewBox="0 0 22 20"><circle cx="9" cy="2.4" r="2.2" fill="#6f7180"/><path d="M2 8.5l4.5-3.5h5l2 4.5-2.2 1.2-1.3-2.5-2 2.8 3.5 3.2V20H9v-5l-2.8-2.3L4.6 20H1.6L3.8 11z" fill="#6f7180"/><path d="M12.5 20l4.5-9 4.5 9z" fill="#bfc1ca"/></svg>
<svg class="a" style="left:45px;top:157px" width="9.4" height="8.7" viewBox="0 0 19 18"><path d="M1 0.5L18.5 17.5H1z" fill="#b1b3be"/><path d="M4.2 8.5l5.5 5.5H4.2z" fill="#f9fafb"/><path d="M1 17.5h17.5" stroke="#9a9cab" stroke-width="1.2"/></svg>
<svg class="a" style="left:45.6px;top:176px" width="7.8" height="8.8" viewBox="0 0 16 18"><path d="M1 1h9.5L15 5.5V17H1z" fill="#b8bac4"/><path d="M10.5 1v4.5H15z" fill="#6f7282"/><rect x="4" y="9" width="8" height="5" fill="#dfe0e6"/></svg>
<svg class="a" style="left:45.6px;top:195px" width="8.2" height="8.8" viewBox="0 0 16 17"><rect x="1" y="0.5" width="14" height="13.5" rx="1.5" fill="#737687"/><circle cx="8" cy="5" r="2.3" fill="#f9fafb"/><path d="M3.8 11.5a4.2 3.2 0 0 1 8.4 0z" fill="#f9fafb"/><path d="M2 16h12" stroke="#8a8d9b" stroke-width="1.6"/></svg>
<svg class="a" style="left:44.6px;top:214.7px" width="10.2" height="8" viewBox="0 0 20 16"><path d="M5 1h5l2 1.5h7.5V14H5z" fill="#bcbec8"/><path d="M1.2 4v9.3a2 2 0 0 0 2 2h12" fill="none" stroke="#a5a8b4" stroke-width="1.8"/></svg>
<svg class="a" style="left:45.8px;top:254.5px" width="8.1" height="9" viewBox="0 0 16 18"><rect x="1" y="1" width="14" height="16" fill="#bcbec8"/><path d="M4 6h8M4 10h8M4 14h5" stroke="#a2a5b1" stroke-width="1.3"/></svg>
<svg class="a" style="left:44.8px;top:274.8px" width="9.8" height="7.4" viewBox="0 0 20 15"><path d="M1 1h3v6l5-3v3l5-3v3l5-3v11H1z" fill="#bcbec8"/><path d="M4 7l5-3v3l5-3v3l5-3M1 1v14" fill="none" stroke="#9598a6" stroke-width="1.3"/></svg>
<svg class="a" style="left:44.8px;top:304px" width="9.8" height="8.7" viewBox="0 0 20 18"><path d="M8 0.5h4l.6 2.3 2.2 1.1 2.3-.8 2 3.4-1.7 1.7v2.4l1.7 1.7-2 3.4-2.3-.8-2.2 1.1-.6 2.3H8l-.6-2.3-2.2-1.1-2.3.8-2-3.4 1.7-1.7V8L.9 6.3l2-3.4 2.3.8 2.2-1.1z" fill="#75788a"/><circle cx="10" cy="9" r="2.6" fill="#a8abb8"/></svg>
<svg class="a" style="left:44.8px;top:322.8px" width="9.8" height="8.9" viewBox="0 0 20 18"><circle cx="10" cy="9" r="8" fill="#bcbec8"/><circle cx="10" cy="9" r="3" fill="#f9fafb"/><path d="M3.5 2.5l4 4M16.5 2.5l-4 4M3.5 15.5l4-4M16.5 15.5l-4-4" stroke="#6f7282" stroke-width="2.2"/></svg>
<svg class="a" style="left:52.5px;top:545px" width="14.7" height="14.7" viewBox="0 0 14.7 14.7"><rect x="0" y="0" width="14.7" height="14.7" fill="#0d0d0d"/><rect x="7.2" y="0" width="7.5" height="6.8" fill="#6a55e8"/><path d="M11.4 0v3.3h3.3" stroke="#b9aef5" stroke-width="0.7" fill="none"/><path d="M0 7.5h3M7 11.4v3.3" stroke="#f9fafb" stroke-width="0.8"/><rect x="3" y="3.6" width="7.8" height="7.9" rx="0.8" fill="none" stroke="#9a9a9a" stroke-width="0.8"/><rect x="7" y="0" width="0.5" height="3.6" fill="#f9fafb" opacity="0.6"/></svg>
<div style="position:absolute;left:30px;top:20px;width:840px;height:556px;border:1px solid rgba(255,255,255,.35);border-radius:5.5px;pointer-events:none"></div>
</div>
</body></html>
